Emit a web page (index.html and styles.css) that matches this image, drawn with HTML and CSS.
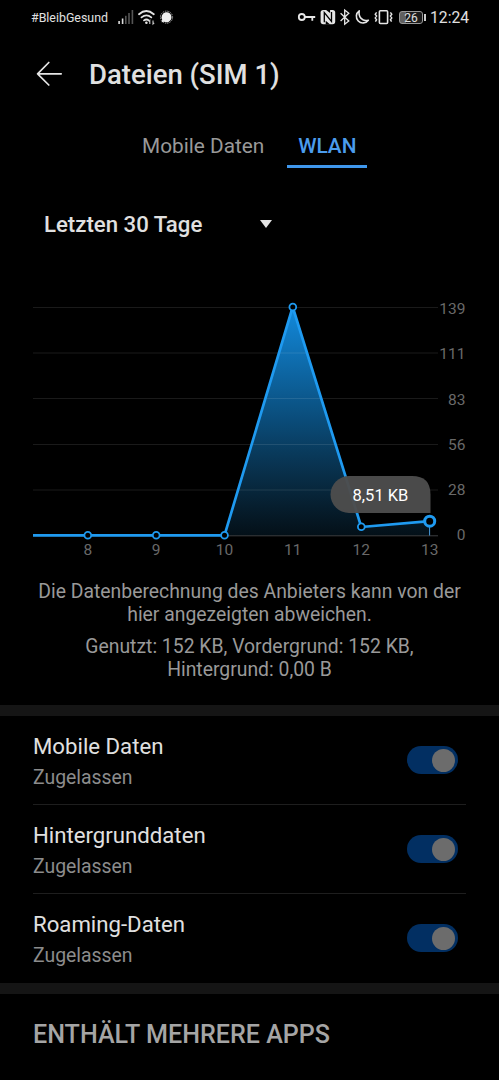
FILE: index.html
```html
<!DOCTYPE html>
<html lang="de">
<head>
    <meta charset="UTF-8">
    <meta name="viewport" content="width=device-width, initial-scale=1.0">
    <title>Dateien (SIM 1)</title>
    <link rel="stylesheet" href="styles.css">
</head>
<body>

    <!-- status bar -->
    <div class="status-bar">
        <span class="carrier">#BleibGesund</span>
        <svg class="status-left" width="58" height="18" viewBox="116 8 58 18">
            <!-- mobile signal -->
            <g fill="#ddd">
                <rect x="118.3" y="21" width="1.6" height="3"/>
                <rect x="121.8" y="18.5" width="1.6" height="5.5"/>
            </g>
            <g fill="#555">
                <rect x="125" y="15.8" width="1.6" height="8.2"/>
                <rect x="128.2" y="13" width="1.6" height="11"/>
                <rect x="131.6" y="10" width="1.6" height="14"/>
            </g>
            <!-- wifi -->
            <g fill="none" stroke="#e4e4e4" stroke-width="1.8" stroke-linecap="round">
                <path d="M139 14.2q7.3-6.4 14.8 0"/>
                <path d="M141.5 17.4q4.9-4 9.8 0"/>
                <path d="M144 20.4q2.4-1.8 4.8 0"/>
            </g>
            <circle cx="146.4" cy="22.8" r="1.3" fill="#e4e4e4"/>
            <path d="M149.8 24v-3.6l-1 1.2M153 20.4V24l1.2-1.2" fill="none" stroke="#ccc" stroke-width="1.1"/>
            <!-- messenger bubble -->
            <circle cx="166.5" cy="17.2" r="6.1" fill="none" stroke="#999" stroke-width="1" stroke-dasharray="1.5 .9"/>
            <path d="M161.6 22.3l.6-2.6a5 5 0 1 1 2.1 2z" fill="#f0f0f0"/>
        </svg>
        <svg class="status-right" width="98" height="18" viewBox="297 8 98 18">
            <!-- vpn key -->
            <g fill="none" stroke="#e6e6e6" stroke-width="1.8">
                <circle cx="301.8" cy="17" r="3"/>
                <path d="M304.8 17h10.4M312.3 17v3.8"/>
            </g>
            <!-- nfc -->
            <rect x="320.6" y="10" width="14.6" height="14.2" rx="2.6" fill="#e6e6e6"/>
            <path d="M324.3 22.3v-9.8l7.2 9v-9.6" fill="none" stroke="#000" stroke-width="1.3"/>
            <path d="M325.7 9.8h4.4v3.2zM330.1 24.4h-4.4v-3.7z" fill="#000"/>
            <!-- bluetooth -->
            <path d="M340.6 13.3l8.2 7.6-4.1 3.3V10l4.1 3.3-8.2 7.6" fill="none" stroke="#e6e6e6" stroke-width="1.3"/>
            <!-- do not disturb -->
            <path d="M359.2 10.9a6.6 6.6 0 1 0 9.1 9.3c-6 1.6-10.2-3.3-9.1-9.3z" fill="none" stroke="#e6e6e6" stroke-width="1.6" stroke-linejoin="round"/>
            <!-- vibrate -->
            <g fill="none" stroke="#e6e6e6">
                <rect x="379.4" y="10.7" width="8.2" height="12.8" rx="1" stroke-width="1.6"/>
                <path d="M376.6 12.4l-1.4 1.9 1.4 1.8-1.4 1.8 1.4 1.8-1.2 2M390.4 12.4l1.4 1.9-1.4 1.8 1.4 1.8-1.4 1.8 1.2 2" stroke-width="1.4"/>
            </g>
        </svg>
        <span class="battery">26</span>
        <span class="clock">12:24</span>
    </div>

    <!-- title -->
    <div class="header">
        <svg width="27" height="27" viewBox="0 0 27 27" fill="none" stroke="#e6e6e6" stroke-width="1.7" stroke-linecap="round" stroke-linejoin="round">
            <path d="M25.2 12.8H1.6M12.8 1.5L1.6 12.8 12.8 24"/>
        </svg>
        <h1>Dateien (SIM 1)</h1>
    </div>

    <div class="tabs">
        <a class="tab">Mobile Daten</a>
        <a class="tab active">WLAN</a>
    </div>

    <div class="period">
        <span>Letzten 30 Tage</span>
        <i class="arrow"></i>
    </div>

    <!-- usage chart, KB per day -->
    <svg class="chart" width="499" height="290" viewBox="0 280 499 290">
        <defs>
            <linearGradient id="area" x1="0" y1="307" x2="0" y2="535" gradientUnits="userSpaceOnUse">
                <stop offset="0" stop-color="#1391e8" stop-opacity=".95"/>
                <stop offset=".5" stop-color="#1391e8" stop-opacity=".52"/>
                <stop offset="1" stop-color="#1f86cc" stop-opacity=".12"/>
            </linearGradient>
        </defs>
        <path class="area" d="M224.5 535.5L292.7 307l68.6 220 68.4-6v14.5z"/>
        <path class="grid" d="M33 307.5h405M33 353h405M33 398.5h405M33 444.5h405M33 490h405"/>
        <path class="axis" d="M33 535.8h405"/>
        <path class="marker" d="M429.6 521v14.5"/>
        <path class="line" d="M33 535.3H224.5L292.7 307l68.6 220 68.4-5.8"/>
        <g class="dots">
            <circle cx="87.8" cy="535.3" r="3.4"/>
            <circle cx="156.2" cy="535.3" r="3.4"/>
            <circle cx="224.5" cy="535.3" r="3.4"/>
            <circle cx="292.8" cy="307" r="3.4"/>
            <circle cx="361.3" cy="526.8" r="3.4"/>
            <circle class="current" cx="429.7" cy="521.2" r="5"/>
        </g>
        <g class="y-labels">
            <text x="465.5" y="313.9">139</text>
            <text x="465.5" y="359.4">111</text>
            <text x="465.5" y="404.6">83</text>
            <text x="465.5" y="450">56</text>
            <text x="465.5" y="495.4">28</text>
            <text x="465.5" y="540.4">0</text>
        </g>
        <g class="x-labels">
            <text x="87.8" y="555.3">8</text>
            <text x="156.2" y="555.3">9</text>
            <text x="224.5" y="555.3">10</text>
            <text x="292.7" y="555.3">11</text>
            <text x="361.3" y="555.3">12</text>
            <text x="429.7" y="555.3">13</text>
        </g>
        <path class="bubble" d="M349 476h63q18.5 0 18.5 18.5V513H349a18.5 18.5 0 0 1 0-37z"/>
        <text class="bubble-text" x="380.5" y="501.2">8,51 KB</text>
    </svg>

    <div class="notes">
        <p class="n1">Die Datenberechnung des Anbieters kann von der<br>hier angezeigten abweichen.</p>
        <p>Genutzt: 152 KB, Vordergrund: 152 KB,<br>Hintergrund: 0,00 B</p>
    </div>

    <div class="settings">
        <div class="row">
            <div>
                <div class="name">Mobile Daten</div>
                <div class="state">Zugelassen</div>
            </div>
            <span class="switch"></span>
        </div>
        <div class="row">
            <div>
                <div class="name">Hintergrunddaten</div>
                <div class="state">Zugelassen</div>
            </div>
            <span class="switch"></span>
        </div>
        <div class="row">
            <div>
                <div class="name">Roaming-Daten</div>
                <div class="state">Zugelassen</div>
            </div>
            <span class="switch"></span>
        </div>
    </div>

    <h2>ENTHÄLT MEHRERE APPS</h2>

</body>
</html>
```
FILE: styles.css
```css
/* General styling */
* {
    box-sizing: border-box;
}

body {
    font-family: Roboto, sans-serif;
    background-color: #000;
    color: #e0e0e0;
    margin: 0;
    padding: 0;
    height: 1080px;
    overflow: hidden;
}

svg {
    display: block;
    flex: none;
}

h1, h2, p {
    margin: 0;
}

/* Status bar */
.status-bar {
    display: flex;
    align-items: center;
    height: 34px;
    padding-left: 31px;
    white-space: nowrap;
}

.carrier {
    width: 85px;
    font-size: 12.4px;
    padding-top: 1px;
}

.status-right {
    margin-left: 123px;
}

.battery {
    position: relative;
    width: 24px;
    height: 13px;
    margin: 1px 0 0 4px;
    border: 1px solid #999;
    border-radius: 3px;
    background: linear-gradient(90deg, #606060 27%, #1c1c1c 27%);
    font-size: 12px;
    line-height: 12px;
    text-align: center;
}

/* battery cap */
.battery::after {
    content: "";
    position: absolute;
    right: -4px;
    top: 2px;
    width: 2px;
    height: 7px;
    background: #ccc;
}

.clock {
    margin-left: 7px;
    font-size: 15.7px;
    padding-top: 1px;
}

/* Title */
.header {
    display: flex;
    align-items: center;
    height: 80px;
    padding-left: 36px;
    gap: 26px;
}

h1 {
    font-size: 27.5px;
    font-weight: 500;
    line-height: 32px;
    padding-top: 2px;
    color: #e0e0e0;
}

/* Tabs */
.tabs {
    display: flex;
    height: 54px;
    padding: 10px 0 0 131px;
    gap: 12px;
}

.tab {
    height: 44px;
    padding: 0 11px;
    font-size: 20.8px;
    line-height: 44px;
    color: #999;
    white-space: nowrap;
}

.tab.active {
    width: 80px;
    padding: 0;
    text-align: center;
    font-weight: 500;
    color: #4b9ced;
    border-bottom: 3px solid #3f97ec;
}

/* Period dropdown */
.period {
    display: flex;
    align-items: center;
    height: 112px;
    padding-left: 44px;
    font-size: 22.2px;
    font-weight: 500;
}

.period span {
    width: 216px;
}

.arrow {
    border: 6px solid transparent;
    border-top: 8px solid #e4e4e4;
    border-bottom: 0;
}

/* Chart */
.area { fill: url(#area); }
.grid { stroke: #fff; stroke-opacity: .1; }
.axis { stroke: #3c3f42; }
.marker { stroke: #4b9bdc; }
.line {
    fill: none;
    stroke: #1f9af0;
    stroke-width: 2.7;
    stroke-linejoin: round;
}
.dots circle {
    fill: #000;
    stroke: #1f9af0;
    stroke-width: 1.8;
}
.dots .current { stroke-width: 3; }
.y-labels, .x-labels {
    fill: #696969;
    font-size: 15.5px;
}
.y-labels { text-anchor: end; }
.x-labels { text-anchor: middle; }
.bubble { fill: #4c4c4c; fill-opacity: .97; }
.bubble-text {
    fill: #fff;
    font-size: 16.5px;
    text-anchor: middle;
}

/* Notes under the chart */
.notes {
    height: 135px;
    padding-top: 11px;
    text-align: center;
    font-size: 19.36px;
    line-height: 22.6px;
    color: #999;
    white-space: nowrap;
}

.n1 {
    margin-bottom: 10px;
}

/* Settings list */
.settings {
    border-top: 11px solid #151515;
    border-bottom: 11px solid #151515;
    padding: 0 33px;
}

.row {
    display: flex;
    justify-content: space-between;
    align-items: flex-start;
    height: 89px;
    padding: 15px 8px 0 0;
    border-bottom: 1px solid #1e1e1e;
}

.row:last-child {
    border-bottom: 0;
}

.name {
    font-size: 22.2px;
    line-height: 30px;
}

.state {
    font-size: 19.4px;
    line-height: 33px;
    color: #8c8c8c;
}

.switch {
    width: 51px;
    height: 28px;
    margin-top: 15px;
    padding: 2.5px 3px;
    border-radius: 14px;
    background: #022f62;
}

.switch::after {
    content: "";
    display: block;
    width: 23px;
    height: 23px;
    margin-left: auto;
    border-radius: 50%;
    background: #6c6c6c;
}

h2 {
    padding: 26px 0 0 33px;
    font-size: 25.1px;
    line-height: 30px;
    font-weight: 500;
    color: #a5a5a5;
}
```
